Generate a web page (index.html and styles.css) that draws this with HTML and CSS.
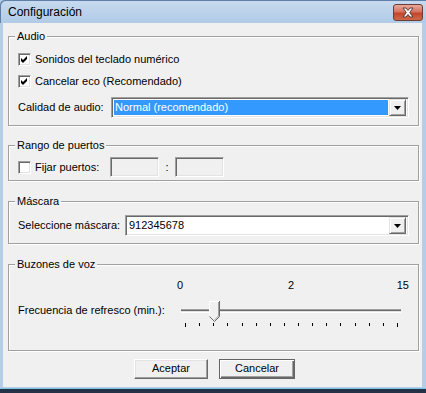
FILE: index.html
```html
<!DOCTYPE html>
<html>
<head>
<meta charset="utf-8">
<link rel="stylesheet" href="styles.css">
</head>
<body>
<div class="window">
  <div class="titlebar">
    <span class="title">Configuración</span>
    <span class="close">
      <svg width="30" height="17" viewBox="0 0 30 17">
        <path d="M10 4 L13 4 L15 6.5 L17 4 L20 4 L16.7 8.5 L20 13 L17 13 L15 10.5 L13 13 L10 13 L13.3 8.5 Z" fill="#fff" stroke="#5a3a36" stroke-width="1" stroke-linejoin="round"/>
      </svg>
    </span>
  </div>
  <div class="frame">
    <div class="client">
      <div class="group g-audio">
        <span class="legend">Audio</span>
        <div class="row r-cb1">
          <span class="check"><svg width="13" height="13" viewBox="0 0 13 13"><path d="M3 5 L5 7 L9 3 L9 6 L5 10 L3 8 Z" fill="#000"/></svg></span>
          <span class="lbl">Sonidos del teclado numérico</span>
        </div>
        <div class="row r-cb2">
          <span class="check"><svg width="13" height="13" viewBox="0 0 13 13"><path d="M3 5 L5 7 L9 3 L9 6 L5 10 L3 8 Z" fill="#000"/></svg></span>
          <span class="lbl">Cancelar eco (Recomendado)</span>
        </div>
        <div class="row r-sel">
          <span class="fieldlbl w-calidad">Calidad de audio:</span>
          <div class="combo c-calidad">
            <span class="combo-text selected">Normal (recomendado)</span>
            <span class="drop"><svg width="7" height="4" viewBox="0 0 7 4"><path d="M0 0 H7 L3.5 4 Z" fill="#000"/></svg></span>
          </div>
        </div>
      </div>

      <div class="group g-rango">
        <span class="legend">Rango de puertos</span>
        <div class="row r-ports">
          <span class="check-wrap">
            <span class="check"></span>
            <span class="lbl">Fijar puertos:</span>
          </span>
          <span class="textbox disabled"></span>
          <span class="colon">:</span>
          <span class="textbox disabled"></span>
        </div>
      </div>

      <div class="group g-mascara">
        <span class="legend">Máscara</span>
        <div class="row r-mask">
          <span class="fieldlbl w-mask">Seleccione máscara:</span>
          <div class="combo c-mask">
            <span class="combo-text">912345678</span>
            <span class="drop"><svg width="7" height="4" viewBox="0 0 7 4"><path d="M0 0 H7 L3.5 4 Z" fill="#000"/></svg></span>
          </div>
        </div>
      </div>

      <div class="group g-buzones">
        <span class="legend">Buzones de voz</span>
        <div class="scale">
          <span class="n0">0</span>
          <span class="n2">2</span>
          <span class="n15">15</span>
        </div>
        <div class="row r-slider">
          <span class="fieldlbl w-freq">Frecuencia de refresco (min.):</span>
          <div class="slider">
            <div class="track"></div>
            <div class="ticks">
              <i class="long"></i><i></i><i></i><i></i><i></i><i></i><i></i><i></i>
              <i></i><i></i><i></i><i></i><i></i><i></i><i></i><i class="long"></i>
            </div>
            <svg class="thumb" width="11" height="21" viewBox="0 0 11 21">
              <path d="M0.5 0.5 H10.5 V15.5 L5.5 20.5 L0.5 15.5 Z" fill="#f0f0f0"/>
              <path d="M0.5 15.5 V0.5 H10" fill="none" stroke="#fff"/>
              <path d="M10.5 0 V15.5 L5.5 20.5 L0.5 15.5" fill="none" stroke="#696969"/>
              <path d="M9.5 1 V15 L5.5 19" fill="none" stroke="#a0a0a0"/>
            </svg>
          </div>
        </div>
      </div>

      <div class="buttons">
        <span class="btn">Aceptar</span>
        <span class="btn default">Cancelar</span>
      </div>
    </div>
  </div>
  <div class="frame-bottom"></div>
</div>
</body>
</html>
```

FILE: styles.css
```css
html, body {
  margin: 0;
  padding: 0;
}
body {
  width: 426px;
  height: 393px;
  overflow: hidden;
  font-family: "Liberation Sans", Arial, sans-serif;
  font-size: 11px;
  color: #000;
}
.window {
  width: 426px;
  height: 393px;
  display: flex;
  flex-direction: column;
  background: #b4cde9;
}
.titlebar {
  height: 23px;
  flex: none;
  display: flex;
  align-items: center;
  background: linear-gradient(#c7daef, #b1cbe7);
  border-top-left-radius: 5px;
  box-shadow: inset 1px 1px 0 #5f7fa6;
}
.title {
  font-size: 12px;
  margin-left: 8px;
  margin-top: 1px;
  flex: 1;
}
.close {
  width: 30px;
  height: 17px;
  margin-right: 3px;
  margin-top: 1px;
  box-sizing: border-box;
  border: 1px solid #6d3b35;
  border-radius: 3px;
  background: linear-gradient(#e9a99a 0%, #d7735f 45%, #c2452d 55%, #cf6a48 100%);
  display: flex;
  align-items: center;
  justify-content: center;
  position: relative;
}
.close svg {
  position: absolute;
  left: -1px;
  top: -1px;
}
.frame {
  flex: 1;
  display: flex;
  padding: 0 4px 0 3px;
}
.client {
  flex: 1;
  background: #f0f0f0;
  padding: 13px 3px 0 5px;
  display: flex;
  flex-direction: column;
}
.frame-bottom {
  height: 6px;
  flex: none;
  background: linear-gradient(#b4cde9 0 1px, #7fc6e6 1px 2px, #233246 2px 100%);
}

/* group boxes */
.group {
  position: relative;
  box-sizing: border-box;
  border: 1px solid #a0a0a0;
  box-shadow: 1px 1px 0 #fff, inset 1px 1px 0 #fff;
  padding-left: 9px;
  display: flex;
  flex-direction: column;
}
.legend {
  position: absolute;
  left: 6px;
  top: -7px;
  line-height: 13px;
  padding: 0 2px;
  background: #f0f0f0;
}
.g-audio { height: 90px; }
.g-rango { height: 36px; margin-top: 19px; }
.g-mascara { height: 43px; margin-top: 20px; }
.g-buzones { height: 87px; margin-top: 20px; }

.row {
  display: flex;
  align-items: center;
}
.lbl, .fieldlbl {
  line-height: 13px;
}
.r-cb1 { margin-top: 16px; height: 13px; }
.r-cb2 { margin-top: 9px; height: 13px; }
.r-sel { margin-top: 9px; height: 21px; }
.r-ports { margin-top: 11px; height: 20px; }
.r-mask { margin-top: 13px; height: 21px; }

.check {
  width: 13px;
  height: 13px;
  box-sizing: border-box;
  flex: none;
  background: #fff;
  border: 1px solid;
  border-color: #a0a0a0 #fff #fff #a0a0a0;
  box-shadow: inset 1px 1px 0 #696969, inset -1px -1px 0 #e3e3e3;
  margin-right: 4px;
  position: relative;
}
.check svg {
  position: absolute;
  left: -1px;
  top: -1px;
}
.check-wrap {
  width: 92px;
  display: flex;
  align-items: center;
  flex: none;
}

.fieldlbl { flex: none; }
.w-calidad { width: 93px; }
.w-mask { width: 107px; }
.w-freq { width: 159px; }

.combo {
  box-sizing: border-box;
  height: 21px;
  border: 1px solid;
  border-color: #a0a0a0 #fff #fff #a0a0a0;
  box-shadow: inset 1px 1px 0 #696969, inset -1px -1px 0 #e3e3e3;
  background: #fff;
  display: flex;
  align-items: center;
  padding: 2px 2px 2px 2px;
}
.c-calidad { width: 298px; }
.c-mask { width: 284px; }
.combo-text {
  flex: 1;
  height: 15px;
  line-height: 15px;
  padding-left: 1px;
  margin-right: 1px;
}
.combo-text.selected {
  background: #3399ff;
  color: #fff;
}
.drop {
  width: 17px;
  height: 17px;
  box-sizing: border-box;
  flex: none;
  background: #f0f0f0;
  border: 1px solid;
  border-color: #e3e3e3 #696969 #696969 #e3e3e3;
  box-shadow: inset 1px 1px 0 #fff, inset -1px -1px 0 #a0a0a0;
  display: flex;
  align-items: center;
  justify-content: center;
}
.drop svg { margin-top: 1px; }

.textbox {
  width: 49px;
  height: 20px;
  box-sizing: border-box;
  flex: none;
  border: 1px solid;
  border-color: #a0a0a0 #fff #fff #a0a0a0;
  box-shadow: inset 1px 1px 0 #696969, inset -1px -1px 0 #e3e3e3;
  background: #f0f0f0;
}
.colon {
  width: 16px;
  text-align: center;
  line-height: 13px;
}

/* slider */
.scale {
  margin-top: 14px;
  margin-left: 159px;
  height: 13px;
  line-height: 13px;
  display: flex;
  width: 232px;
}
.n0 { width: 111px; }
.n15 { margin-left: auto; }
.r-slider {
  align-items: flex-start;
  margin-top: 9px;
}
.w-freq { margin-top: 3px; }
.slider {
  position: relative;
  width: 232px;
  height: 28px;
}
.track {
  margin-top: 8px;
  margin-left: 4px;
  width: 220px;
  height: 4px;
  box-sizing: border-box;
  border-top: 1px solid #a0a0a0;
  border-bottom: 1px solid #fff;
  background: linear-gradient(#696969 0 1px, #e3e3e3 1px);
}
.ticks {
  margin-top: 10px;
  margin-left: 8px;
  width: 213px;
  display: flex;
  justify-content: space-between;
  align-items: flex-start;
}
.ticks i {
  display: block;
  width: 1px;
  height: 3px;
  background: #000;
}
.ticks i.long { height: 4px; }
.thumb {
  position: absolute;
  left: 32px;
  top: 0;
}

/* buttons */
.buttons {
  display: flex;
  margin-top: 8px;
  padding-left: 126px;
  gap: 11px;
}
.btn {
  box-sizing: border-box;
  width: 74px;
  height: 20px;
  line-height: 16px;
  text-align: center;
  background: #f0f0f0;
  border: 1px solid;
  border-color: #fff #696969 #696969 #fff;
  box-shadow: inset -1px -1px 0 #a0a0a0, inset 1px 1px 0 #e3e3e3;
}
.btn.default {
  width: 76px;
  border: 1px solid #646464;
  box-shadow: inset 1px 1px 0 #fff, inset -1px -1px 0 #696969, inset -2px -2px 0 #a0a0a0;
}
```
